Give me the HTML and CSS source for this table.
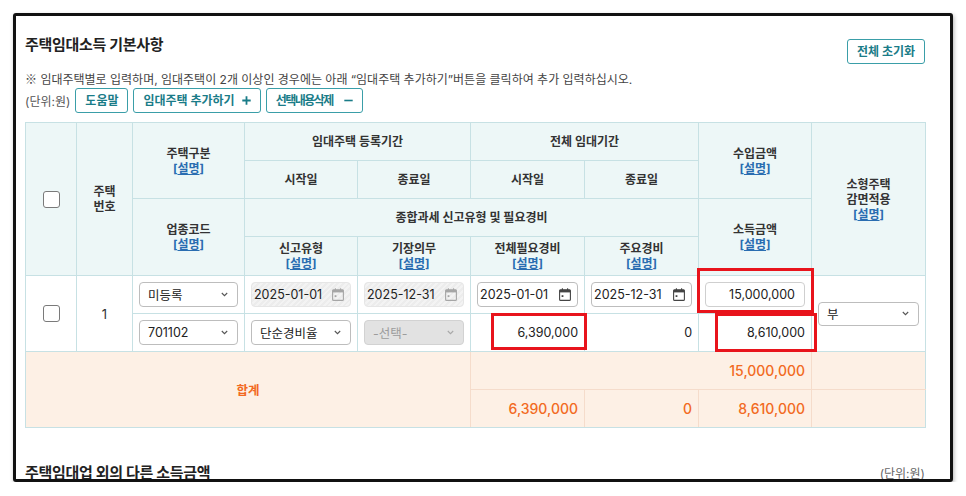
FILE: index.html
```html
<!DOCTYPE html>
<html lang="ko">
<head>
<meta charset="utf-8">
<title>주택임대소득 기본사항</title>
<link rel="stylesheet" href="styles.css">
</head>
<body>
<div class="frame">
  <div class="content">
    <div class="head">
      <h2 class="title">주택임대소득 기본사항</h2>
      <button class="btn btn-reset">전체 초기화</button>
    </div>
    <p class="notice"><span class="mark-sym">※</span> 임대주택별로 입력하며, 임대주택이 2개 이상인 경우에는 아래 “임대주택 추가하기”버튼을 클릭하여 추가 입력하십시오.</p>
    <div class="toolbar">
      <span class="unit">(단위:원)</span>
      <button class="btn">도움말</button>
      <button class="btn">임대주택 추가하기<svg class="ico ico-plus" width="9" height="9" viewBox="0 0 9 9"><path d="M4.5 0.3v8.4M0.3 4.5h8.4" stroke="currentColor" stroke-width="1.8" fill="none"/></svg></button>
      <button class="btn"><span class="tight">선택내용삭제</span><svg class="ico ico-minus" width="9" height="9" viewBox="0 0 9 9"><path d="M0.3 4.5h8.4" stroke="currentColor" stroke-width="1.6" fill="none"/></svg></button>
    </div>

    <div class="table-wrap">
      <table class="grid">
        <colgroup>
          <col class="c-chk"><col class="c-no"><col class="c-w112"><col class="c-w113"><col class="c-w113"><col class="c-w114"><col class="c-w114"><col class="c-w113"><col class="c-w114">
        </colgroup>
        <thead>
          <tr class="r38">
            <th rowspan="4"><span class="chk"></span></th>
            <th rowspan="4">주택<br>번호</th>
            <th rowspan="2">주택구분<br><span class="desc">[<a href="#">설명</a>]</span></th>
            <th colspan="2">임대주택 등록기간</th>
            <th colspan="2">전체 임대기간</th>
            <th rowspan="2">수입금액<br><span class="desc">[<a href="#">설명</a>]</span></th>
            <th rowspan="4">소형주택<br>감면적용<br><span class="desc">[<a href="#">설명</a>]</span></th>
          </tr>
          <tr class="r38">
            <th>시작일</th>
            <th>종료일</th>
            <th>시작일</th>
            <th>종료일</th>
          </tr>
          <tr class="r38">
            <th rowspan="2">업종코드<br><span class="desc">[<a href="#">설명</a>]</span></th>
            <th colspan="4">종합과세 신고유형 및 필요경비</th>
            <th rowspan="2">소득금액<br><span class="desc">[<a href="#">설명</a>]</span></th>
          </tr>
          <tr class="r39">
            <th>신고유형<br><span class="desc">[<a href="#">설명</a>]</span></th>
            <th>기장의무<br><span class="desc">[<a href="#">설명</a>]</span></th>
            <th>전체필요경비<br><span class="desc">[<a href="#">설명</a>]</span></th>
            <th>주요경비<br><span class="desc">[<a href="#">설명</a>]</span></th>
          </tr>
        </thead>
        <tbody>
          <tr class="r38">
            <td rowspan="2" class="center"><span class="chk"></span></td>
            <td rowspan="2" class="center no">1</td>
            <td><div class="sel"><span>미등록</span><svg class="chev" width="7" height="5" viewBox="0 0 7 5"><path d="M0.8 1l2.7 2.7L6.2 1" fill="none" stroke="currentColor" stroke-width="1.1"/></svg></div></td>
            <td><div class="date dis"><span>2025-01-01</span><svg class="cal" width="12" height="13" viewBox="0 0 12 13"><rect x="0.6" y="1.8" width="10.8" height="10.6" rx="1" fill="none" stroke="currentColor" stroke-width="1.1"/><rect x="0.6" y="1.8" width="10.8" height="2.6" fill="currentColor"/><path d="M3.4 0.2v2.6M8.6 0.2v2.6" stroke="currentColor" stroke-width="1.1"/><rect x="2.6" y="7.2" width="1.8" height="1.8" fill="currentColor"/></svg></div></td>
            <td><div class="date dis"><span>2025-12-31</span><svg class="cal" width="12" height="13" viewBox="0 0 12 13"><rect x="0.6" y="1.8" width="10.8" height="10.6" rx="1" fill="none" stroke="currentColor" stroke-width="1.1"/><rect x="0.6" y="1.8" width="10.8" height="2.6" fill="currentColor"/><path d="M3.4 0.2v2.6M8.6 0.2v2.6" stroke="currentColor" stroke-width="1.1"/><rect x="2.6" y="7.2" width="1.8" height="1.8" fill="currentColor"/></svg></div></td>
            <td><div class="date"><span>2025-01-01</span><svg class="cal" width="12" height="13" viewBox="0 0 12 13"><rect x="0.6" y="1.8" width="10.8" height="10.6" rx="1" fill="none" stroke="currentColor" stroke-width="1.1"/><rect x="0.6" y="1.8" width="10.8" height="2.6" fill="currentColor"/><path d="M3.4 0.2v2.6M8.6 0.2v2.6" stroke="currentColor" stroke-width="1.1"/><rect x="2.6" y="7.2" width="1.8" height="1.8" fill="currentColor"/></svg></div></td>
            <td><div class="date"><span>2025-12-31</span><svg class="cal" width="12" height="13" viewBox="0 0 12 13"><rect x="0.6" y="1.8" width="10.8" height="10.6" rx="1" fill="none" stroke="currentColor" stroke-width="1.1"/><rect x="0.6" y="1.8" width="10.8" height="2.6" fill="currentColor"/><path d="M3.4 0.2v2.6M8.6 0.2v2.6" stroke="currentColor" stroke-width="1.1"/><rect x="2.6" y="7.2" width="1.8" height="1.8" fill="currentColor"/></svg></div></td>
            <td><div class="amount">15,000,000</div></td>
            <td rowspan="2"><div class="sel sel-sm"><span>부</span><svg class="chev" width="7" height="5" viewBox="0 0 7 5"><path d="M0.8 1l2.7 2.7L6.2 1" fill="none" stroke="currentColor" stroke-width="1.1"/></svg></div></td>
          </tr>
          <tr class="r38">
            <td><div class="sel"><span>701102</span><svg class="chev" width="7" height="5" viewBox="0 0 7 5"><path d="M0.8 1l2.7 2.7L6.2 1" fill="none" stroke="currentColor" stroke-width="1.1"/></svg></div></td>
            <td><div class="sel"><span>단순경비율</span><svg class="chev" width="7" height="5" viewBox="0 0 7 5"><path d="M0.8 1l2.7 2.7L6.2 1" fill="none" stroke="currentColor" stroke-width="1.1"/></svg></div></td>
            <td><div class="sel dis"><span>-선택-</span><svg class="chev" width="7" height="5" viewBox="0 0 7 5"><path d="M0.8 1l2.7 2.7L6.2 1" fill="none" stroke="currentColor" stroke-width="1.1"/></svg></div></td>
            <td class="num">6,390,000</td>
            <td class="num">0</td>
            <td class="num">8,610,000</td>
          </tr>
        </tbody>
        <tfoot>
          <tr class="r38">
            <td colspan="5" rowspan="2" class="sum-label">합계</td>
            <td colspan="3" class="num">15,000,000</td>
            <td></td>
          </tr>
          <tr class="r38 last">
            <td class="num">6,390,000</td>
            <td class="num">0</td>
            <td class="num">8,610,000</td>
            <td></td>
          </tr>
        </tfoot>
      </table>
      <div class="mark mark-income"></div>
      <div class="mark mark-expense"></div>
      <div class="mark mark-earned"></div>
    </div>

    <div class="sub">
      <h3 class="sub-title">주택임대업 외의 다른 소득금액</h3>
      <span class="unit unit-right">(단위:원)</span>
    </div>
  </div>
</div>
</body>
</html>
```

FILE: styles.css
```css
html, body {
  margin: 0;
  padding: 0;
  background: #fff;
}

body {
  font-family: Inter, "Noto Sans CJK KR", sans-serif;
  color: #222;
  font-size: 12.5px;
}

.frame {
  box-sizing: border-box;
  margin: 13px 0 0 13px;
  width: 940px;
  height: 469px;
  border: 3px solid #111;
  border-radius: 3px;
  overflow: hidden;
  background: #fff;
  box-shadow: 1px 2px 4px rgba(0, 0, 0, 0.3);
}

.content {
  padding: 19px 25px 0 9px;
}

.head {
  display: flex;
  justify-content: space-between;
  align-items: flex-start;
}

.title {
  margin: 0;
  font-size: 15px;
  line-height: 20px;
  font-weight: 700;
  letter-spacing: -0.3px;
  color: #222;
}

.btn {
  box-sizing: border-box;
  height: 25px;
  display: inline-flex;
  align-items: center;
  padding: 0 9px;
  border: 1px solid #3a9ea8;
  border-radius: 3px;
  background: #fff;
  color: #1a7c88;
  font-family: Inter, "Noto Sans CJK KR", sans-serif;
  font-size: 12px;
  font-weight: 700;
  line-height: 23px;
  cursor: pointer;
}

.btn-reset {
  margin-top: 4px;
}

.ico-plus {
  margin-left: 7px;
}

.ico-minus {
  margin-left: 11px;
}

.tight {
  letter-spacing: -1.5px;
}

.notice {
  margin: 8px 0 0;
  height: 16px;
  font-size: 12px;
  line-height: 16px;
  color: #444;
  white-space: nowrap;
}

.mark-sym {
  font-family: "Noto Sans CJK KR", sans-serif;
  line-height: 1;
}

.toolbar {
  display: flex;
  align-items: center;
  gap: 5px;
  height: 25px;
}

.unit {
  font-size: 12px;
  color: #555;
}

.table-wrap {
  position: relative;
  margin-top: 9px;
}

.grid {
  width: 900px;
  table-layout: fixed;
  border-collapse: collapse;
  font-size: 12px;
}

.c-chk { width: 51px; }
.c-no { width: 56px; }
.c-w112 { width: 112px; }
.c-w113 { width: 113px; }
.c-w114 { width: 114px; }

.r38 { height: 38px; }
.r39 { height: 39px; }

.grid th,
.grid td {
  border: 1px solid #c7e1e4;
  padding: 0 6px;
  vertical-align: middle;
}

.grid th {
  background: #edf7f7;
  font-weight: 700;
  color: #333;
  line-height: 15px;
  text-align: center;
}

.desc {
  color: #2a6db1;
  font-weight: 700;
}

.desc a {
  color: #2a6db1;
  text-decoration: underline;
  text-underline-offset: 1px;
}

.chk {
  display: inline-block;
  box-sizing: border-box;
  width: 17px;
  height: 17px;
  border: 1.3px solid #7a7a7a;
  border-radius: 3px;
  background: #fff;
  vertical-align: middle;
}

.center {
  text-align: center;
}

.no {
  font-size: 13px;
  color: #333;
}

.sel,
.date,
.amount {
  box-sizing: border-box;
  height: 25px;
  width: 100%;
  display: flex;
  align-items: center;
  border: 1px solid #bdbdbd;
  border-radius: 4px;
  background: #fff;
  font-size: 12.5px;
  color: #222;
}

.sel {
  justify-content: space-between;
  padding: 0 9px 0 8px;
}

.sel .chev {
  color: #555;
}

.sel-sm {
  height: 24px;
}

.sel.dis {
  background: #e2e2e2;
  border-color: #d2d2d2;
  color: #9c9c9c;
}

.sel.dis .chev {
  color: #a8a8a8;
}

.date {
  justify-content: space-between;
  padding: 0 6px 0 2px;
}

.date .cal {
  color: #444;
}

.date.dis {
  border-color: #e6e6e6;
  background: repeating-linear-gradient(135deg, #ececec 0 2px, #f3f3f3 2px 4px);
}

.date.dis .cal {
  color: #a6a6a6;
}

.amount {
  justify-content: flex-end;
  padding: 0 9px 0 6px;
  border-color: #cfcfcf;
}

.num {
  text-align: right;
  font-size: 12.5px;
  color: #222;
}

.grid tfoot td {
  background: #fdf0e5;
  border-color: #f5dccb;
  color: #f26a22;
  font-size: 14px;
  font-weight: 500;
}

.grid tfoot .sum-label {
  text-align: center;
  font-size: 12.5px;
  font-weight: 700;
  border-left-color: #c7e1e4;
}

.grid tfoot tr:first-child td {
  border-top-color: #d9e6e6;
}

.grid tfoot tr.last td,
.grid tfoot .sum-label {
  border-bottom-color: #c7e1e4;
}

.grid tfoot td:last-child {
  border-right-color: #c7e1e4;
}

.mark {
  position: absolute;
  box-sizing: border-box;
  border: 3px solid #e8141c;
}

.mark-income {
  left: 672px;
  top: 146px;
  width: 117px;
  height: 45px;
}

.mark-expense {
  left: 466px;
  top: 191px;
  width: 96px;
  height: 37px;
}

.mark-earned {
  left: 690px;
  top: 191px;
  width: 102px;
  height: 39px;
}

.sub {
  display: flex;
  justify-content: space-between;
  align-items: baseline;
  margin-top: 35px;
}

.sub-title {
  margin: 0;
  font-size: 15px;
  line-height: 20px;
  font-weight: 700;
  letter-spacing: -0.3px;
  color: #222;
}

.unit-right {
  color: #666;
}
```
